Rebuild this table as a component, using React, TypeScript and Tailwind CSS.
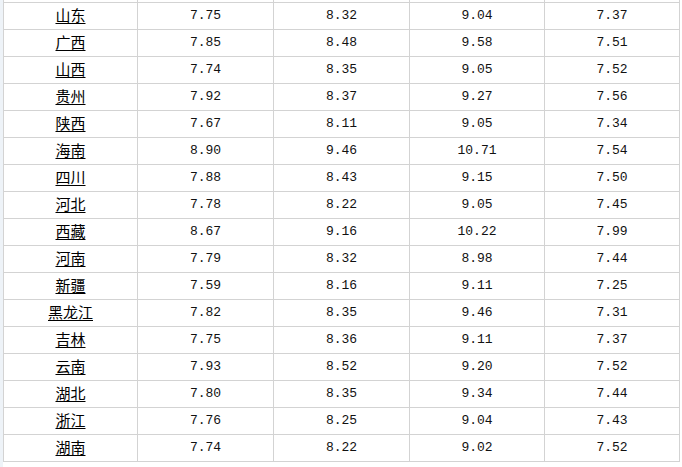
const rows: [string, string, string, string, string][] = [
  ['山东', '7.75', '8.32', '9.04', '7.37'],
  ['广西', '7.85', '8.48', '9.58', '7.51'],
  ['山西', '7.74', '8.35', '9.05', '7.52'],
  ['贵州', '7.92', '8.37', '9.27', '7.56'],
  ['陕西', '7.67', '8.11', '9.05', '7.34'],
  ['海南', '8.90', '9.46', '10.71', '7.54'],
  ['四川', '7.88', '8.43', '9.15', '7.50'],
  ['河北', '7.78', '8.22', '9.05', '7.45'],
  ['西藏', '8.67', '9.16', '10.22', '7.99'],
  ['河南', '7.79', '8.32', '8.98', '7.44'],
  ['新疆', '7.59', '8.16', '9.11', '7.25'],
  ['黑龙江', '7.82', '8.35', '9.46', '7.31'],
  ['吉林', '7.75', '8.36', '9.11', '7.37'],
  ['云南', '7.93', '8.52', '9.20', '7.52'],
  ['湖北', '7.80', '8.35', '9.34', '7.44'],
  ['浙江', '7.76', '8.25', '9.04', '7.43'],
  ['湖南', '7.74', '8.22', '9.02', '7.52'],
];

export default function App() {
  return (
    <div className="flex h-[467px] w-[682px] overflow-hidden bg-white">
      {/* left page edge */}
      <div className="w-[3px] shrink-0 bg-[#eef3f8]" />
      <div className="self-start">
        <div className="grid grid-cols-[133px_135px_135px_134px_134px] grid-rows-[2px] auto-rows-[26px] gap-px bg-[#d3d3d3] px-px pb-px">
          {/* tail of the row scrolled above */}
          {[0, 1, 2, 3, 4].map(i => (
            <div key={i} className="bg-white" />
          ))}
          {rows.map(([name, a, b, c, d]) => (
            <div key={name} className="contents">
              <div className="flex items-center justify-center bg-white pb-[3px]">
                <a href="#" className="text-[15px] leading-none text-black underline underline-offset-[2px] [font-family:'Noto_Sans_CJK_SC',sans-serif]">
                  {name}
                </a>
              </div>
              {[a, b, c, d].map((v, i) => (
                <div key={i} className="flex items-center justify-center bg-white pb-px text-[13px] text-[#111] [font-family:'Liberation_Mono',monospace]">
                  {v}
                </div>
              ))}
            </div>
          ))}
        </div>
      </div>
    </div>
  );
}
